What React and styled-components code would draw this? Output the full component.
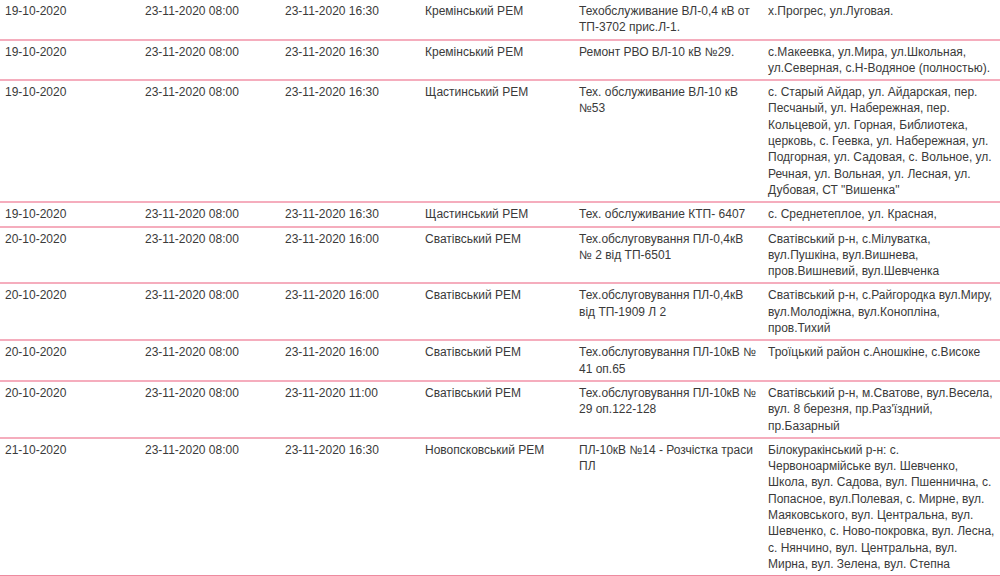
import React from "react";
import styled, { createGlobalStyle } from "styled-components";

const Global = createGlobalStyle`
  html, body { margin: 0; padding: 0; background: #fff; }
  body { font-family: "Liberation Sans", Arial, sans-serif; }
`;

const rows = [
  ["19-10-2020", "23-11-2020 08:00", "23-11-2020 16:30", "Кремінський РЕМ", "Техобслуживание ВЛ-0,4 кВ от ТП-3702 прис.Л-1.", "х.Прогрес, ул.Луговая."],
  ["19-10-2020", "23-11-2020 08:00", "23-11-2020 16:30", "Кремінський РЕМ", "Ремонт РВО ВЛ-10 кВ №29.", "с.Макеевка, ул.Мира, ул.Школьная, ул.Северная, с.Н-Водяное (полностью)."],
  ["19-10-2020", "23-11-2020 08:00", "23-11-2020 16:30", "Щастинський РЕМ", "Тех. обслуживание ВЛ-10 кВ №53", "с. Старый Айдар, ул. Айдарская, пер. Песчаный, ул. Набережная, пер. Кольцевой, ул. Горная, Библиотека, церковь, с. Геевка, ул. Набережная, ул. Подгорная, ул. Садовая, с. Вольное, ул. Речная, ул. Вольная, ул. Лесная, ул. Дубовая, СТ \"Вишенка\""],
  ["19-10-2020", "23-11-2020 08:00", "23-11-2020 16:30", "Щастинський РЕМ", "Тех. обслуживание КТП- 6407", "с. Среднетеплое, ул. Красная,"],
  ["20-10-2020", "23-11-2020 08:00", "23-11-2020 16:00", "Сватівський РЕМ", "Тех.обслуговування ПЛ-0,4кВ № 2 від ТП-6501", "Сватівський р-н, с.Мілуватка, вул.Пушкіна, вул.Вишнева, пров.Вишневий, вул.Шевченка"],
  ["20-10-2020", "23-11-2020 08:00", "23-11-2020 16:00", "Сватівський РЕМ", "Тех.обслуговування ПЛ-0,4кВ від ТП-1909 Л 2", "Сватівський р-н, с.Райгородка вул.Миру, вул.Молодіжна, вул.Конопліна, пров.Тихий"],
  ["20-10-2020", "23-11-2020 08:00", "23-11-2020 16:00", "Сватівський РЕМ", "Тех.обслуговування ПЛ-10кВ № 41 оп.65", "Троїцький район с.Аношкіне, с.Високе"],
  ["20-10-2020", "23-11-2020 08:00", "23-11-2020 11:00", "Сватівський РЕМ", "Тех.обслуговування ПЛ-10кВ № 29 оп.122-128", "Сватівський р-н, м.Сватове, вул.Весела, вул. 8 березня, пр.Раз'їздний, пр.Базарный"],
  ["21-10-2020", "23-11-2020 08:00", "23-11-2020 16:30", "Новопсковський РЕМ", "ПЛ-10кВ №14 - Розчістка траси ПЛ", "Білокуракінський р-н: с. Червоноармійське вул. Шевченко, Школа, вул. Садова, вул. Пшеннична, с. Попасное, вул.Полевая, с. Мирне, вул. Маяковського, вул. Центральна, вул. Шевченко, с. Ново-покровка, вул. Лесна, с. Нянчино, вул. Центральна, вул. Мирна, вул. Зелена, вул. Степна"],
];

const Table = styled.div`
  width: 1000px;
  display: flex;
  flex-direction: column;
`;

const Row = styled.div`
  display: grid;
  grid-template-columns: 140px 140px 140px 154px 189px 237px;
  border-bottom: 2px solid ${(p) => (p.$last ? "#ee8aa0" : "#f5adbd")};
`;

const Cell = styled.div`
  padding: 3px 4px 3px 5px;
  font-size: 12px;
  line-height: 16.3px;
  color: #3a3a3a;
`;

export default function App() {
  return (
    <>
      <Global />
      <Table>
        {rows.map((r, i) => (
          <Row key={i} $last={i === rows.length - 1}>
            {r.map((c, j) => (
              <Cell key={j}>{c}</Cell>
            ))}
          </Row>
        ))}
      </Table>
    </>
  );
}
